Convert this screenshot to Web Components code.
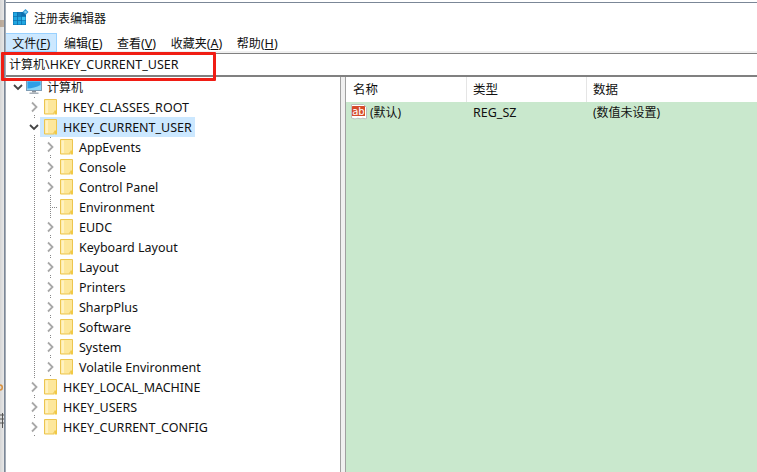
<!DOCTYPE html>
<html lang="zh">
<head>
<meta charset="utf-8">
<title>注册表编辑器</title>
<style>
html, body { margin: 0; height: 100%; overflow: hidden; background: #fff; }
body { font-family: "Noto Sans", "Noto Sans CJK SC", sans-serif; font-size: 12.5px; color: #111; }
.zh { font-size: 12px; }
u { text-underline-offset: 1px; text-decoration-thickness: 1px; }
</style>
</head>
<body>
<reg-app>
  <reg-titlebar slot="title"><span class="zh">注册表编辑器</span></reg-titlebar>
  <reg-menubar slot="menu">
    <reg-menu-item active><span class="zh">文件</span>(<u>F</u>)</reg-menu-item>
    <reg-menu-item><span class="zh">编辑</span>(<u>E</u>)</reg-menu-item>
    <reg-menu-item><span class="zh">查看</span>(<u>V</u>)</reg-menu-item>
    <reg-menu-item><span class="zh">收藏夹</span>(<u>A</u>)</reg-menu-item>
    <reg-menu-item><span class="zh">帮助</span>(<u>H</u>)</reg-menu-item>
  </reg-menubar>
  <reg-address slot="address"><span class="zh">计算机</span>\HKEY_CURRENT_USER</reg-address>
  <reg-tree slot="tree">
    <tree-row level="0" state="open" icon="computer"><span class="zh">计算机</span></tree-row>
    <tree-row level="1" state="closed" lines="1">HKEY_CLASSES_ROOT</tree-row>
    <tree-row level="1" state="open" lines="1" selected>HKEY_CURRENT_USER</tree-row>
    <tree-row level="2" state="closed" lines="1 2">AppEvents</tree-row>
    <tree-row level="2" state="closed" lines="1 2">Console</tree-row>
    <tree-row level="2" state="closed" lines="1 2">Control Panel</tree-row>
    <tree-row level="2" state="leaf" lines="1 2">Environment</tree-row>
    <tree-row level="2" state="closed" lines="1 2">EUDC</tree-row>
    <tree-row level="2" state="closed" lines="1 2">Keyboard Layout</tree-row>
    <tree-row level="2" state="closed" lines="1 2">Layout</tree-row>
    <tree-row level="2" state="closed" lines="1 2">Printers</tree-row>
    <tree-row level="2" state="closed" lines="1 2">SharpPlus</tree-row>
    <tree-row level="2" state="closed" lines="1 2">Software</tree-row>
    <tree-row level="2" state="closed" lines="1 2">System</tree-row>
    <tree-row level="2" state="closed" lines="1 2">Volatile Environment</tree-row>
    <tree-row level="1" state="closed" lines="1">HKEY_LOCAL_MACHINE</tree-row>
    <tree-row level="1" state="closed" lines="1">HKEY_USERS</tree-row>
    <tree-row level="1" state="closed" lines="1">HKEY_CURRENT_CONFIG</tree-row>
  </reg-tree>
  <reg-list slot="list"></reg-list>
</reg-app>

<script>
// contenedor principal
const templateApp = document.createElement("template");
templateApp.innerHTML = `
<style>
:host { display: flex; height: 472px; position: relative; overflow: hidden; }
.edge { width: 4px; flex: none; background: linear-gradient(90deg, #d6d6d6, #e8e8e8); border-right: 1px solid #7b8797; box-shadow: 1px 0 #a4acb6; z-index: 1; }
.edge svg { display: block; }
.main { flex: 1; min-width: 0; display: flex; flex-direction: column; border-top: 1px solid #7b8797; margin-top: 2px; }
.panes { flex: 1; min-height: 0; display: flex; }
.split { width: 4px; flex: none; background: #f0f0f0; border-left: 1px solid #a0a0a0; border-right: 1px solid #a0a0a0; }
.mark { position: absolute; left: 1px; top: 52px; width: 209px; height: 23px; border: 3px solid #f01d14; border-radius: 1px; z-index: 2; }
</style>
<div class="edge">
  <svg width="4" height="472">
    <path d="M1 20v7M3 20v7" stroke="#9a7a5a"/>
    <path d="M0 385c3 0 3 5 0 5" fill="none" stroke="#d9913f" stroke-width="1.500"/>
    <path d="M0 415h4M0 419h4M0 423h4M2.500 413v15" stroke="#555"/>
  </svg>
</div>
<div class="main">
  <slot name="title"></slot>
  <slot name="menu"></slot>
  <slot name="address"></slot>
  <div class="panes">
    <slot name="tree"></slot>
    <div class="split"></div>
    <slot name="list"></slot>
  </div>
</div>
<div class="mark"></div>
`
class RegApp extends HTMLElement {
  constructor() {
    super()
    this.attachShadow({ mode: "open" })
    this.shadowRoot.appendChild(templateApp.content.cloneNode(true))
  }
}
customElements.define("reg-app", RegApp);

const templateTitle = document.createElement("template");
templateTitle.innerHTML = `
<style>
:host { display: flex; align-items: center; height: 29px; padding-left: 8px; gap: 5px; }
svg { flex: none; display: block; margin-top: -1px; }
</style>
<svg width="16" height="16" viewBox="0 0 16 16">
  <rect x="0" y="3" width="13" height="13" fill="#0b6fae"/>
  <path d="M.5 3.500h3.500v3.500h-3.500zM.5 7.800h3.500v3.500h-3.500zM.5 12h3.500v3.500h-3.500zM4.800 7.800h3.500v3.500h-3.500zM4.800 12h3.500v3.500h-3.500zM9 12h3.500v3.500H9z" fill="#21a6e0"/>
  <path d="M9 7.800h3.500v3.500H9z" fill="#3cc3f2"/>
  <path d="M4.800 3.500h3.500v3.500h-3.500z" fill="#157fbe"/>
  <path d="M12.500 0l3 3-3 3-3-3z" fill="#2f97d4"/>
  <circle cx="12.500" cy="3" r="1.300" fill="#7fd0f2"/>
</svg>
<span><slot></slot></span>
`
class RegTitlebar extends HTMLElement {
  constructor() {
    super()
    this.attachShadow({ mode: "open" })
    this.shadowRoot.appendChild(templateTitle.content.cloneNode(true))
  }
}
customElements.define("reg-titlebar", RegTitlebar);

const templateMenubar = document.createElement("template");
templateMenubar.innerHTML = `
<style>
:host { display: flex; height: 18px; padding: 1px 0 2px; background: linear-gradient(#fff 0 19px, #f0f0f0 19px); }
</style>
<slot></slot>
`
class RegMenubar extends HTMLElement {
  constructor() {
    super()
    this.attachShadow({ mode: "open" })
    this.shadowRoot.appendChild(templateMenubar.content.cloneNode(true))
  }
}
customElements.define("reg-menubar", RegMenubar);

const templateMenuItem = document.createElement("template");
templateMenuItem.innerHTML = `
<style>
:host { display: flex; align-items: center; height: 17px; padding: 0 6.3px; border: 1px solid transparent; white-space: pre; }
:host([active]) { background: #cce8ff; border-color: #99d1ff; padding-right: 5.3px; }
</style>
<span><slot></slot></span>
`
class RegMenuItem extends HTMLElement {
  constructor() {
    super()
    this.attachShadow({ mode: "open" })
    this.shadowRoot.appendChild(templateMenuItem.content.cloneNode(true))
  }
}
customElements.define("reg-menu-item", RegMenuItem);

const templateAddress = document.createElement("template");
templateAddress.innerHTML = `
<style>
:host { display: flex; align-items: center; height: 21px; padding-left: 4px; border-top: 1px solid #808080; border-bottom: 2px solid #808080; background: #fff; }
span { margin-top: -1px; }
</style>
<span><slot></slot></span>
`
class RegAddress extends HTMLElement {
  constructor() {
    super()
    this.attachShadow({ mode: "open" })
    this.shadowRoot.appendChild(templateAddress.content.cloneNode(true))
  }
}
customElements.define("reg-address", RegAddress);

const templateTree = document.createElement("template");
templateTree.innerHTML = `
<style>
:host { display: block; width: 335px; flex: none; background: #fff; overflow: hidden; }
</style>
<slot></slot>
`
class RegTree extends HTMLElement {
  constructor() {
    super()
    this.attachShadow({ mode: "open" })
    this.shadowRoot.appendChild(templateTree.content.cloneNode(true))
  }
}
customElements.define("reg-tree", RegTree);

// fila del arbol: level, state (open, closed, leaf), icon, lines
const templateRow = document.createElement("template");
templateRow.innerHTML = `
<style>
:host { display: block; height: 20px; }
.row { display: flex; align-items: center; height: 20px; background-repeat: no-repeat; }
.chev { width: 16px; height: 16px; flex: none; background: #fff; }
.chev svg { display: block; }
.chev.leaf { background: none; }
.item { display: flex; align-items: center; height: 20px; padding: 0 3px 0 2px; margin-left: -2px; white-space: nowrap; }
:host([selected]) .item { background: #cce8ff; }
.icon { width: 16px; height: 16px; flex: none; margin-right: 5px; display: block; }
</style>
<div class="row">
  <span class="pad"></span>
  <span class="chev"></span>
  <span class="item">
    <svg class="icon" viewBox="0 0 16 16"></svg>
    <span><slot></slot></span>
  </span>
</div>
`
const folderIcon = `
  <path d="M2.500 .5h12v12.500h-2.500v2h-9.500z" fill="#fde79b" stroke="#ecc54f"/>
  <path d="M3.500 1.500h2.500v12.500h-2.500z" fill="#fff2c2"/>
  <path d="M12.500 11.500h2.500v4h-2.500z" fill="#f1c944"/>`
const computerIcon = `
  <rect x="0.500" y="1.500" width="15" height="10" fill="#8ad6f7" stroke="#7f9db5"/>
  <path d="M1.500 2.500h13v3.500c-4 2-9 3.500-13 3.500z" fill="#2f9fe6"/>
  <rect x="6" y="12" width="4" height="1.500" fill="#8b9199"/>
  <rect x="3.500" y="13.500" width="9" height="1.500" fill="#a7b0b8"/>`
const chevOpen = `<svg width="16" height="16"><path d="M4 6l4 4 4-4" fill="none" stroke="#444" stroke-width="1.800"/></svg>`
const chevClosed = `<svg width="16" height="16"><path d="M6 3.500l4.500 4.500-4.500 4.500" fill="none" stroke="#a8a8a8" stroke-width="1.800"/></svg>`

class TreeRow extends HTMLElement {
  constructor() {
    super()
    this.attachShadow({ mode: "open" })
    this.shadowRoot.appendChild(templateRow.content.cloneNode(true))
  }

  connectedCallback() {
    const level = +this.getAttribute("level")
    const state = this.getAttribute("state")
    const root = this.shadowRoot
    const row = root.querySelector(".row")
    root.querySelector(".pad").style.width = (5 + level * 16) + "px"
    root.querySelector(".icon").innerHTML = this.getAttribute("icon") === "computer" ? computerIcon : folderIcon

    const chev = root.querySelector(".chev")
    if (state === "open") chev.innerHTML = chevOpen
    if (state === "closed") chev.innerHTML = chevClosed
    if (state === "leaf") {
      chev.classList.add("leaf")
      chev.innerHTML = `<svg width="16" height="16"><path d="M8 8.500h7" stroke="#888" stroke-dasharray="1 1"/></svg>`
    }

    // lineas punteadas de la jerarquia
    const lines = (this.getAttribute("lines") || "").split(" ").filter(Boolean)
    const dots = "repeating-linear-gradient(#888 0 1px, transparent 1px 2px)"
    row.style.backgroundImage = lines.map(() => dots).join(",")
    row.style.backgroundSize = lines.map(() => "1px 100%").join(",")
    row.style.backgroundPosition = lines.map(l => (13 + (l - 1) * 16 + 16) + "px 0").join(",")
  }
}
customElements.define("tree-row", TreeRow);

const templateList = document.createElement("template");
templateList.innerHTML = `
<style>
:host { display: flex; flex-direction: column; flex: 1; min-width: 0; background: #c9e8cd; }
.cols { display: grid; grid-template-columns: 121px 120px 1fr; align-items: center; }
.head { height: 25px; background: #fff; }
.head span { height: 25px; line-height: 26px; padding-left: 6px; border-right: 1px solid #e5e5e5; box-sizing: border-box; }
.head span:first-child { padding-left: 7px; }
.head span:last-child { border-right: none; }
.body { height: 20px; }
.body span { padding-left: 6px; white-space: nowrap; }
.zh { font-size: 12px; }
.name { display: flex; align-items: center; gap: 3px; padding-left: 5px !important; font-size: 12px; }
.name svg { flex: none; display: block; }
.name text { font: 11px "DejaVu Sans", sans-serif; fill: #fff; }
</style>
<div class="cols head"><span>名称</span><span>类型</span><span>数据</span></div>
<div class="cols body">
  <span class="name">
    <svg width="16" height="16" viewBox="0 0 16 16">
      <path d="M.5 .5h12l3 3v11c-2 1-3-1-5 0s-3-1-5 0-3 0-5-.5z" fill="#fff" stroke="#bdbdbd"/>
      <rect x="1" y="2" width="13" height="10" rx=".5" fill="#d5492a"/>
      <text x="1.200" y="10.500" textLength="12.600" lengthAdjust="spacingAndGlyphs">ab</text>
    </svg>
    (默认)
  </span>
  <span>REG_SZ</span>
  <span class="zh">(数值未设置)</span>
</div>
`
class RegList extends HTMLElement {
  constructor() {
    super()
    this.attachShadow({ mode: "open" })
    this.shadowRoot.appendChild(templateList.content.cloneNode(true))
  }
}
customElements.define("reg-list", RegList);
</script>
</body>
</html>
